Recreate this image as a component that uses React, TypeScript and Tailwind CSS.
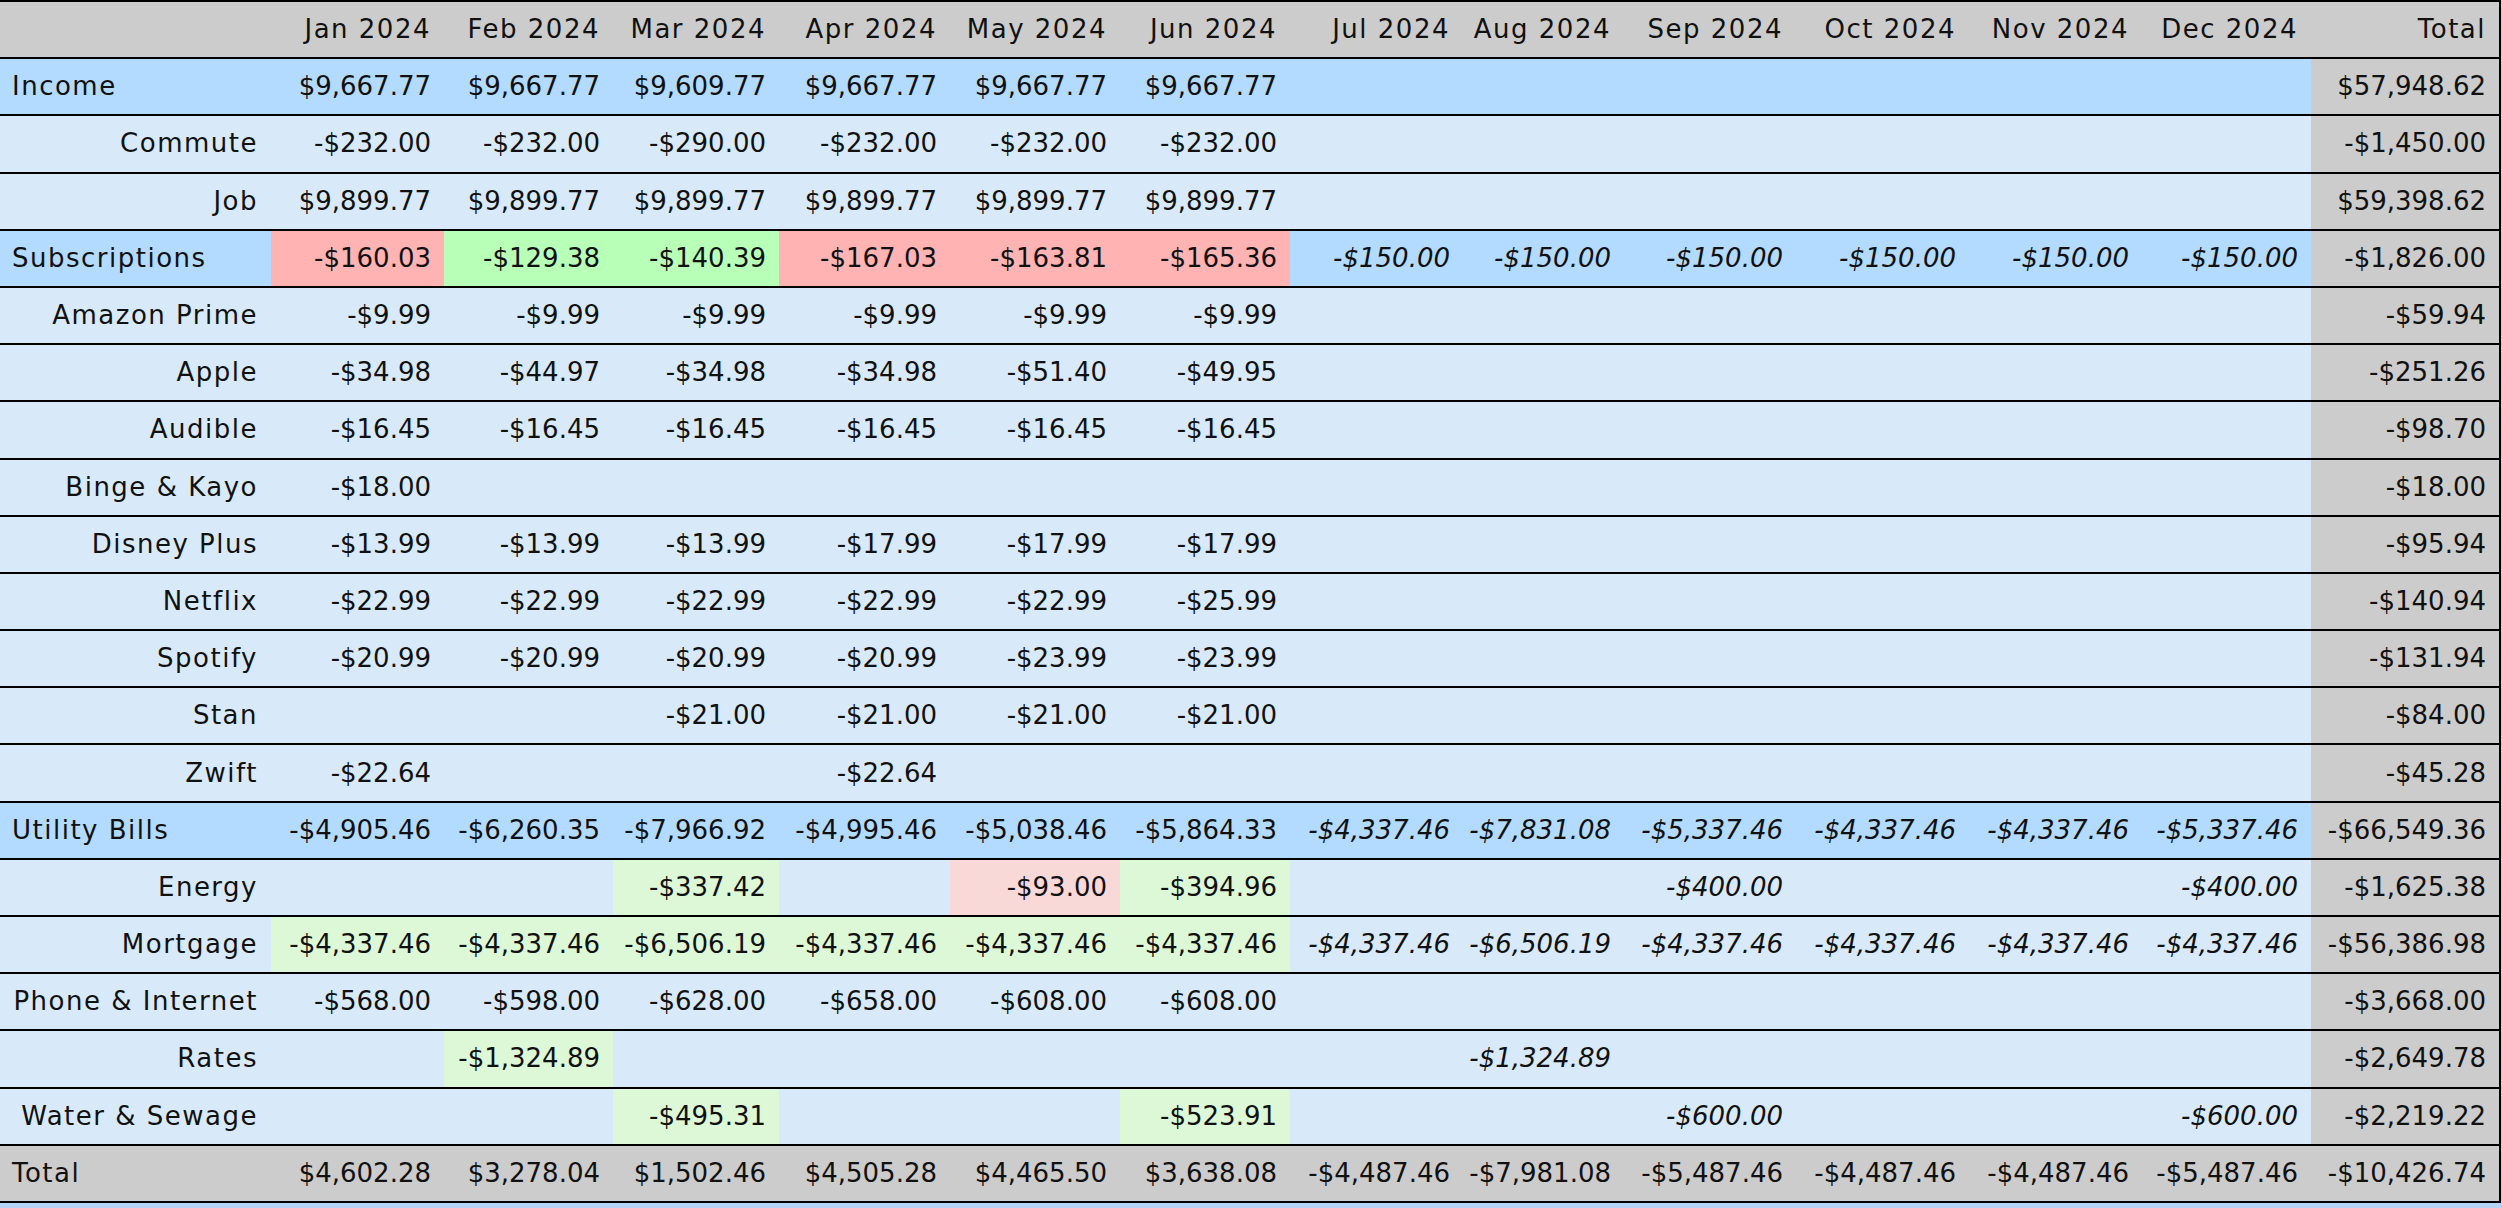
type Kind = "cat" | "sub" | "total";

type Row = {
  label: string;
  kind: Kind;
  vals: string[];
  proj?: string[];
  colors?: Record<number, string>;
  total: string;
};

const RED = "bg-[#ffb3b3]";
const GREEN = "bg-[#b8ffb8]";
const LGREEN = "bg-[#ddf8d6]";
const LRED = "bg-[#f9d8d8]";

const months = [
  "Jan 2024",
  "Feb 2024",
  "Mar 2024",
  "Apr 2024",
  "May 2024",
  "Jun 2024",
  "Jul 2024",
  "Aug 2024",
  "Sep 2024",
  "Oct 2024",
  "Nov 2024",
  "Dec 2024",
];

const e6 = ["", "", "", "", "", ""];

const rows: Row[] = [
  {
    label: "Income",
    kind: "cat",
    vals: ["$9,667.77", "$9,667.77", "$9,609.77", "$9,667.77", "$9,667.77", "$9,667.77"],
    total: "$57,948.62",
  },
  {
    label: "Commute",
    kind: "sub",
    vals: ["-$232.00", "-$232.00", "-$290.00", "-$232.00", "-$232.00", "-$232.00"],
    total: "-$1,450.00",
  },
  {
    label: "Job",
    kind: "sub",
    vals: ["$9,899.77", "$9,899.77", "$9,899.77", "$9,899.77", "$9,899.77", "$9,899.77"],
    total: "$59,398.62",
  },
  {
    label: "Subscriptions",
    kind: "cat",
    vals: ["-$160.03", "-$129.38", "-$140.39", "-$167.03", "-$163.81", "-$165.36"],
    proj: ["-$150.00", "-$150.00", "-$150.00", "-$150.00", "-$150.00", "-$150.00"],
    colors: { 0: RED, 1: GREEN, 2: GREEN, 3: RED, 4: RED, 5: RED },
    total: "-$1,826.00",
  },
  {
    label: "Amazon Prime",
    kind: "sub",
    vals: ["-$9.99", "-$9.99", "-$9.99", "-$9.99", "-$9.99", "-$9.99"],
    total: "-$59.94",
  },
  {
    label: "Apple",
    kind: "sub",
    vals: ["-$34.98", "-$44.97", "-$34.98", "-$34.98", "-$51.40", "-$49.95"],
    total: "-$251.26",
  },
  {
    label: "Audible",
    kind: "sub",
    vals: ["-$16.45", "-$16.45", "-$16.45", "-$16.45", "-$16.45", "-$16.45"],
    total: "-$98.70",
  },
  {
    label: "Binge & Kayo",
    kind: "sub",
    vals: ["-$18.00", "", "", "", "", ""],
    total: "-$18.00",
  },
  {
    label: "Disney Plus",
    kind: "sub",
    vals: ["-$13.99", "-$13.99", "-$13.99", "-$17.99", "-$17.99", "-$17.99"],
    total: "-$95.94",
  },
  {
    label: "Netflix",
    kind: "sub",
    vals: ["-$22.99", "-$22.99", "-$22.99", "-$22.99", "-$22.99", "-$25.99"],
    total: "-$140.94",
  },
  {
    label: "Spotify",
    kind: "sub",
    vals: ["-$20.99", "-$20.99", "-$20.99", "-$20.99", "-$23.99", "-$23.99"],
    total: "-$131.94",
  },
  {
    label: "Stan",
    kind: "sub",
    vals: ["", "", "-$21.00", "-$21.00", "-$21.00", "-$21.00"],
    total: "-$84.00",
  },
  {
    label: "Zwift",
    kind: "sub",
    vals: ["-$22.64", "", "", "-$22.64", "", ""],
    total: "-$45.28",
  },
  {
    label: "Utility Bills",
    kind: "cat",
    vals: ["-$4,905.46", "-$6,260.35", "-$7,966.92", "-$4,995.46", "-$5,038.46", "-$5,864.33"],
    proj: ["-$4,337.46", "-$7,831.08", "-$5,337.46", "-$4,337.46", "-$4,337.46", "-$5,337.46"],
    total: "-$66,549.36",
  },
  {
    label: "Energy",
    kind: "sub",
    vals: ["", "", "-$337.42", "", "-$93.00", "-$394.96"],
    proj: ["", "", "-$400.00", "", "", "-$400.00"],
    colors: { 2: LGREEN, 4: LRED, 5: LGREEN },
    total: "-$1,625.38",
  },
  {
    label: "Mortgage",
    kind: "sub",
    vals: ["-$4,337.46", "-$4,337.46", "-$6,506.19", "-$4,337.46", "-$4,337.46", "-$4,337.46"],
    proj: ["-$4,337.46", "-$6,506.19", "-$4,337.46", "-$4,337.46", "-$4,337.46", "-$4,337.46"],
    colors: { 0: LGREEN, 1: LGREEN, 2: LGREEN, 3: LGREEN, 4: LGREEN, 5: LGREEN },
    total: "-$56,386.98",
  },
  {
    label: "Phone & Internet",
    kind: "sub",
    vals: ["-$568.00", "-$598.00", "-$628.00", "-$658.00", "-$608.00", "-$608.00"],
    total: "-$3,668.00",
  },
  {
    label: "Rates",
    kind: "sub",
    vals: ["", "-$1,324.89", "", "", "", ""],
    proj: ["", "-$1,324.89", "", "", "", ""],
    colors: { 1: LGREEN },
    total: "-$2,649.78",
  },
  {
    label: "Water & Sewage",
    kind: "sub",
    vals: ["", "", "-$495.31", "", "", "-$523.91"],
    proj: ["", "", "-$600.00", "", "", "-$600.00"],
    colors: { 2: LGREEN, 5: LGREEN },
    total: "-$2,219.22",
  },
  {
    label: "Total",
    kind: "total",
    vals: ["$4,602.28", "$3,278.04", "$1,502.46", "$4,505.28", "$4,465.50", "$3,638.08"],
    proj: ["-$4,487.46", "-$7,981.08", "-$5,487.46", "-$4,487.46", "-$4,487.46", "-$5,487.46"],
    total: "-$10,426.74",
  },
];

const gridCols =
  "grid grid-cols-[271px_173px_169px_166px_171px_170px_170px_173px_161px_172px_173px_173px_169px_188px]";

const rowBg: Record<Kind, string> = {
  cat: "bg-[#b3daff]",
  sub: "bg-[#d8eaf9]",
  total: "bg-[#cccccc]",
};

function Cell({ text, className = "" }: { text: string; className?: string }) {
  return (
    <div className={`flex items-center justify-end px-[13px] whitespace-nowrap ${className}`}>
      {text}
    </div>
  );
}

export default function App() {
  return (
    <div className="w-[2502px] h-[1208px] overflow-hidden bg-[#b5d3f2] font-['DejaVu_Sans',sans-serif] text-[26px] text-[#111]">
      <div className="w-[2501px] border-t-2 border-r-2 border-black">
        {/* Header */}
        <div className={`${gridCols} h-[57.2px] border-b-2 border-black bg-[#cccccc] tracking-[1.5px]`}>
          <div />
          {months.map((m) => (
            <Cell key={m} text={m} />
          ))}
          <Cell text="Total" />
        </div>

        {rows.map((row) => {
          const all = [...row.vals, ...(row.proj ?? e6)];
          return (
            <div
              key={row.label}
              className={`${gridCols} h-[57.2px] border-b-2 border-black ${rowBg[row.kind]}`}
            >
              <div
                className={`flex items-center px-[12px] whitespace-nowrap tracking-[1.5px] ${
                  row.kind === "sub" ? "justify-end pr-[13px]" : "justify-start"
                }`}
              >
                {row.label}
              </div>
              {all.map((v, i) => (
                <Cell
                  key={i}
                  text={v}
                  className={`${row.colors?.[i] ?? ""} ${
                    i >= 6 && row.kind !== "total" ? "italic" : ""
                  }`}
                />
              ))}
              <Cell text={row.total} className="bg-[#cccccc]" />
            </div>
          );
        })}
      </div>
    </div>
  );
}
